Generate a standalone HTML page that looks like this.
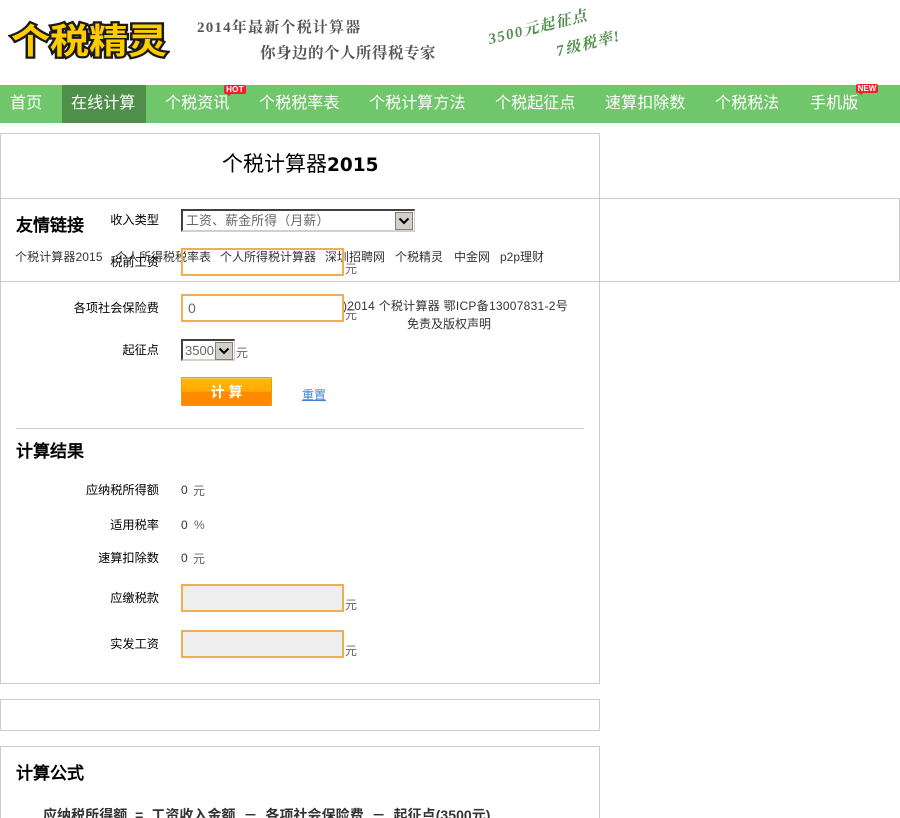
<!DOCTYPE html>
<html lang="zh-CN"><head><meta charset="utf-8"><title>个税计算器2015</title>
<style>
html,body{margin:0;padding:0;background:#fff;width:900px;height:818px;overflow:hidden}
body{position:relative;font-family:"WenQuanYi Zen Hei","Liberation Sans","Noto Sans CJK SC",sans-serif;font-size:12px;color:#333}
.a,.lb,.h,.u,.inp,.box,.nv,.v{position:absolute;box-sizing:border-box;white-space:nowrap}
.box{border:1px solid #ccc;background:transparent}
.lb{color:#000;text-align:right;width:140px;left:19px;line-height:16px;font-size:12.2px}
.h{left:16px;font-size:17px;font-weight:bold;color:#000;line-height:20px;font-family:"WenQuanYi Zen Hei","Liberation Sans",sans-serif}
.u{color:#666;font-size:12px;line-height:14px}
.v{left:181px;color:#333;font-size:12px;line-height:14px}
.inp{left:181px;width:163px;height:28px;border:2px solid #f0ad55}
.nv{top:85px;height:38px;line-height:38px;font-size:16px;color:#fff;letter-spacing:.1px}
.sel{position:absolute;box-sizing:border-box;background:#fff;border-top:2px solid #404040;border-left:2px solid #404040;border-right:1px solid #d4d0c8;border-bottom:2px solid #d4d0c8;color:#666}
.arr{position:absolute;top:0;right:0;width:18px;height:18px;background:#d4d0c8;border:1px solid #808080;box-sizing:border-box}
.t{line-height:16px;color:#333}
</style></head><body>

<!-- header -->
<div class="a" style="left:11px;top:14px;font:bold 39px/50px 'WenQuanYi Zen Hei','Noto Sans CJK SC',sans-serif;color:#fc0;-webkit-text-stroke:5px #1a1a1a;paint-order:stroke fill;transform:scale(1,.9);transform-origin:0 50%">个税精灵</div>
<div class="a" style="left:197px;top:19px;font:bold 15px/18px 'Liberation Serif','Noto Serif CJK SC',serif;color:#555;letter-spacing:1.2px">2014年最新个税计算器</div>
<div class="a" style="left:260px;top:43px;font:bold 15.5px/18px 'Noto Serif CJK SC',serif;color:#555;letter-spacing:.5px">你身边的个人所得税专家</div>
<div class="a" style="left:491px;top:31px;font:italic bold 15px/18px 'Liberation Serif','Noto Serif CJK SC',serif;color:#4f8f4a;transform:rotate(-14deg);transform-origin:0 100%;letter-spacing:1.5px">3500元起征点</div>
<div class="a" style="left:559px;top:43px;font:italic bold 15px/18px 'Liberation Serif','Noto Serif CJK SC',serif;color:#4f8f4a;transform:rotate(-14deg);transform-origin:0 100%;letter-spacing:1.5px">7级税率!</div>

<!-- nav -->
<div class="a" style="left:0;top:85px;width:900px;height:38px;background:#70c66a"></div>
<div class="a" style="left:62px;top:85px;width:84px;height:38px;background:#4f8f49"></div>
<div class="nv" style="left:10px">首页</div>
<div class="nv" style="left:71px">在线计算</div>
<div class="nv" style="left:165px">个税资讯</div>
<div class="nv" style="left:259px">个税税率表</div>
<div class="nv" style="left:369px">个税计算方法</div>
<div class="nv" style="left:495px">个税起征点</div>
<div class="nv" style="left:605px">速算扣除数</div>
<div class="nv" style="left:715px">个税税法</div>
<div class="nv" style="left:810px">手机版</div>
<div class="a" style="left:224px;top:85px;width:22px;height:9px;background:#f0232d;border-radius:2px;color:#fff;font:bold 8px/9px 'Liberation Sans',sans-serif;text-align:center;letter-spacing:.3px">HOT</div>
<div class="a" style="left:227px;top:94px;width:0;height:0;border:2px solid transparent;border-top-color:#f0232d"></div>
<div class="a" style="left:856px;top:84px;width:22px;height:9px;background:#f0232d;border-radius:2px;color:#fff;font:bold 8px/9px 'Liberation Sans',sans-serif;text-align:center">NEW</div>
<div class="a" style="left:859px;top:93px;width:0;height:0;border:2px solid transparent;border-top-color:#f0232d"></div>

<!-- boxes -->
<div class="box" style="left:0;top:133px;width:600px;height:551px"></div>
<div class="box" style="left:0;top:198px;width:900px;height:84px"></div>
<div class="a" style="left:0;top:699px;width:600px;height:32px;border:1px solid #ccc"></div>
<div class="a" style="left:0;top:746px;width:600px;height:90px;border:1px solid #ccc"></div>
<div class="a" style="left:16px;top:428px;width:568px;height:1px;background:#ccc"></div>

<div class="a" style="left:222px;top:152px;line-height:26px;font-size:21px;color:#000;font-family:'WenQuanYi Zen Hei',sans-serif">个税计算器<span style="font:bold 18.500px/26px 'DejaVu Sans',sans-serif">2015</span></div>

<!-- friend links -->
<div class="h" style="top:216px">友情链接</div>
<div class="a t" style="left:15px;top:249px;letter-spacing:.1px">个税计算器2015</div>
<div class="a t" style="left:115px;top:249px">个人所得税税率表</div>
<div class="a t" style="left:220px;top:249px">个人所得税计算器</div>
<div class="a t" style="left:325px;top:249px">深圳招聘网</div>
<div class="a t" style="left:395px;top:249px">个税精灵</div>
<div class="a t" style="left:454px;top:249px">中金网</div>
<div class="a t" style="left:500px;top:249px">p2p理财</div>

<!-- footer text behind form -->
<div class="a t" style="left:343px;top:298px;letter-spacing:.27px">)2014 个税计算器 鄂ICP备13007831-2号</div>
<div class="a t" style="left:407px;top:316px">免责及版权声明</div>

<!-- form -->
<div class="lb" style="top:212px">收入类型</div>
<div class="sel" style="left:181px;top:209px;width:234px;height:23px;line-height:20px;padding-left:3px;font-size:12.8px;letter-spacing:.25px">工资、薪金所得（月薪）<div class="arr" style="top:1px;right:1px"><svg width="16" height="16" viewBox="0 0 16 16"><path d="M3.500 5.500L8 10l4.500-4.500" fill="none" stroke="#000" stroke-width="2"/></svg></div></div>

<div class="lb" style="top:254px">税前工资</div>
<div class="inp" style="top:248px;background:transparent"></div>
<div class="u" style="left:345px;top:262px">元</div>

<div class="lb" style="top:300px">各项社会保险费</div>
<div class="inp" style="top:294px;background:#fff;color:#666;font-size:14px;line-height:24px;padding-left:5px">0</div>
<div class="u" style="left:345px;top:308px">元</div>

<div class="lb" style="top:342px">起征点</div>
<div class="sel" style="left:181px;top:339px;width:54px;height:22px;line-height:19px;padding-left:2px;font-size:13px">3500<div class="arr" style="top:1px;right:1px"><svg width="16" height="16" viewBox="0 0 16 16"><path d="M3.500 5.500L8 10l4.500-4.500" fill="none" stroke="#000" stroke-width="2"/></svg></div></div>
<div class="u" style="left:236px;top:346px">元</div>

<div class="a" style="left:181px;top:377px;width:91px;height:29px;border:1px solid #e6a000;border-radius:1px;background:linear-gradient(#ffb60a 0,#ffaa00 50%,#ff8a00 52%,#ff8a00 100%);color:#fff;font-weight:bold;font-size:14px;line-height:28px;text-align:center;letter-spacing:4px;text-indent:4px;box-sizing:border-box;box-shadow:inset 0 1px 0 #ffc94d">计算</div>
<div class="a" style="left:302px;top:387px;color:#3b82d6;line-height:16px;text-decoration:underline">重置</div>

<!-- results -->
<div class="h" style="top:442px">计算结果</div>
<div class="lb" style="top:482px">应纳税所得额</div>
<div class="v" style="top:483px">0</div><div class="u" style="left:193px;top:484px">元</div>
<div class="lb" style="top:517px">适用税率</div>
<div class="v" style="top:518px">0</div><div class="u" style="left:194px;top:518px">%</div>
<div class="lb" style="top:550px">速算扣除数</div>
<div class="v" style="top:551px">0</div><div class="u" style="left:193px;top:552px">元</div>
<div class="lb" style="top:590px">应缴税款</div>
<div class="inp" style="top:584px;background:#eee"></div>
<div class="u" style="left:345px;top:598px">元</div>
<div class="lb" style="top:636px">实发工资</div>
<div class="inp" style="top:630px;background:#eee"></div>
<div class="u" style="left:345px;top:644px">元</div>

<!-- formula -->
<div class="h" style="top:764px">计算公式</div>
<div class="a" style="left:43px;top:806px;font-size:14px;line-height:18px;font-weight:bold;color:#333;white-space:pre;letter-spacing:.05px">应纳税所得额  =  工资收入金额  －  各项社会保险费  －  起征点(3500元)</div>

</body></html>
